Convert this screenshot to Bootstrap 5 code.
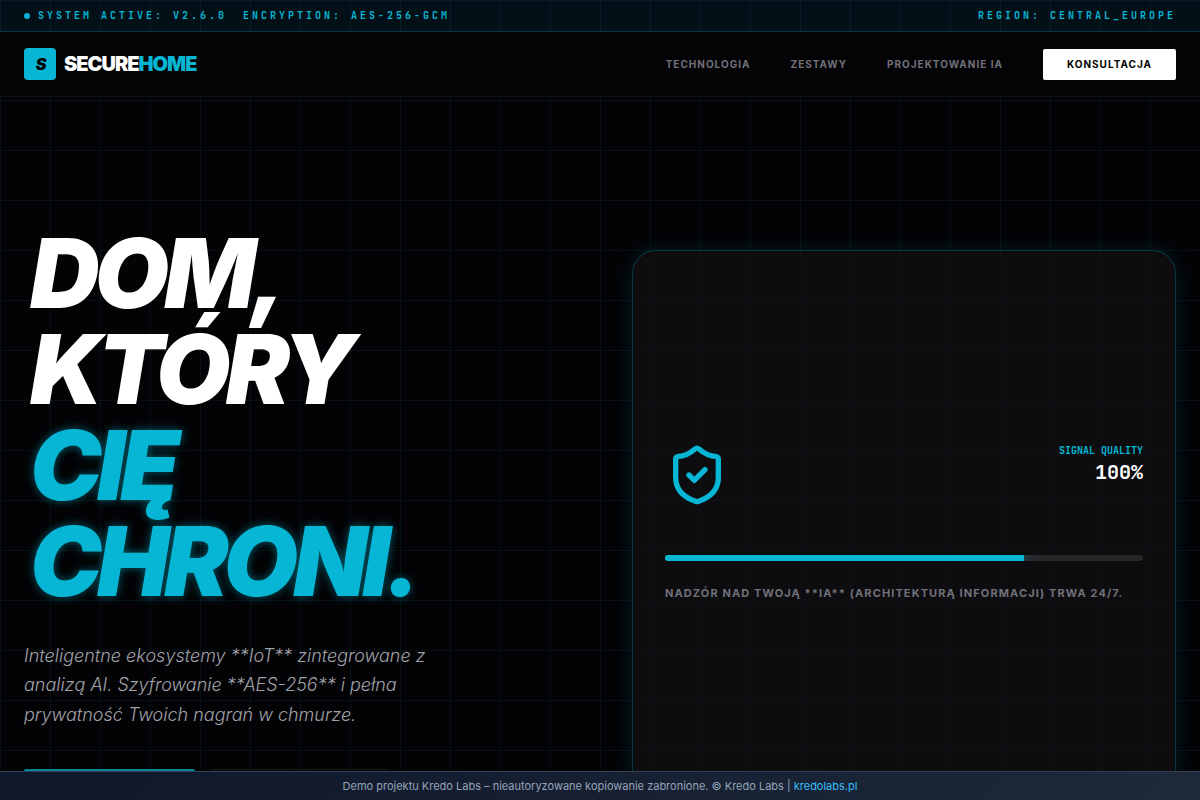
<!DOCTYPE html>
<html lang="pl">
<head>
<meta charset="utf-8">
<meta name="viewport" content="width=device-width, initial-scale=1">
<title>SecureHome</title>
<link href="https://cdn.jsdelivr.net/npm/bootstrap@5.3.0/dist/css/bootstrap.min.css" rel="stylesheet">
<style>
:root { --cyan: #06b6d4; --muted: #71717a; }
body { background: #030305; color: #fff; font-family: Inter, "Liberation Sans", sans-serif; overflow-x: hidden; }
.grid-bg { background-image: linear-gradient(rgba(6,182,212,.08) 1px, transparent 1px), linear-gradient(90deg, rgba(6,182,212,.08) 1px, transparent 1px); background-size: 50px 50px; }
.mono { font-family: "JetBrains Mono", "Liberation Mono", monospace; font-weight: 700; }
.text-cyan { color: var(--cyan); }
.status-bar { background: rgba(6,150,212,.09); border-bottom: 1px solid rgba(6,182,212,.25); font-size: 10px; line-height: 15px; letter-spacing: 3px; padding: 8px 24px; }
.status-dot { width: 6px; height: 6px; background: var(--cyan); }
.site-nav { background: #040406; border-bottom: 1px solid rgba(255,255,255,.06); padding: 16px 24px; }
.logo-mark { width: 32px; height: 32px; border-radius: 4px; background: var(--cyan); color: #000; font-size: 16px; font-weight: 900; font-style: italic; padding-left: 2px; }
.logo-name { font-size: 20px; line-height: 32px; font-weight: 900; letter-spacing: -.05em; color: #fff; }
.menu { gap: 40px; font-size: 10px; line-height: 15px; font-weight: 700; letter-spacing: 1px; }
.menu a { color: var(--muted); text-decoration: none; }
.cta { background: #fff; color: #000; border: 0; border-radius: 2px; padding: 8px 24px; font-size: 10px; line-height: 15px; font-weight: 700; letter-spacing: 1px; }
.hero { padding: 128px 24px; }
.hero .row { --bs-gutter-x: 64px; }
.hero h1 { font-size: 96px; line-height: 96px; font-weight: 900; font-style: italic; letter-spacing: -.05em; padding-left: 6px; margin-bottom: 32px; }
.glow { color: var(--cyan); text-shadow: 0 0 10px rgba(6,182,212,.5); }
.intro { max-width: 448px; font-size: 18px; line-height: 1.625; font-weight: 300; font-style: italic; color: #a1a1aa; margin-bottom: 40px; }
.act { border-radius: 2px; padding: 17px 24px; font-size: 11px; line-height: 17px; font-weight: 700; letter-spacing: 1px; border: 0; color: #fff; }
.act-main { background: #0a859d; min-width: 171px; }
.act-ghost { background: transparent; border: 1px solid #1c1c1f; padding-block: 16px; min-width: 178px; }
.signal { background: rgba(19,18,20,.7); border: 1px solid rgba(6,182,212,.25); border-radius: 24px; box-shadow: 0 0 20px rgba(6,182,212,.15); padding: 32px; aspect-ratio: 1; }
.tiny { font-size: 10px; line-height: 15px; }
.value { font-size: 20px; line-height: 28px; }
.meter { height: 6px; border-radius: 4px; background: #27272a; margin: 48px 0 24px; }
.meter-fill { background: var(--cyan); box-shadow: 0 0 15px rgba(6,182,212,.7); }
.caption-line { font-size: 11px; line-height: 17px; font-weight: 700; letter-spacing: .1em; color: var(--muted); }
.demo-bar { background: linear-gradient(135deg, #0f172a, #1e293b); border-top: 1px solid #334155; color: #94a3b8; font-size: 11px; line-height: 16px; padding: 6px 12px; }
.demo-bar a { color: #38bdf8; text-decoration: none; }
</style>
</head>
<body class="grid-bg">
<div class="status-bar mono text-cyan d-flex justify-content-between">
  <div class="d-flex gap-3">
    <span class="d-flex align-items-center gap-2"><span class="status-dot rounded-circle"></span>SYSTEM ACTIVE: V2.6.0</span>
    <span>ENCRYPTION: AES-256-GCM</span>
  </div>
  <span>REGION: CENTRAL_EUROPE</span>
</div>
<header class="site-nav d-flex justify-content-between align-items-center">
  <a href="#" class="d-flex align-items-center gap-2 text-decoration-none">
    <span class="logo-mark d-flex align-items-center justify-content-center">S</span>
    <span class="logo-name">SECURE<span class="text-cyan">HOME</span></span>
  </a>
  <nav class="menu d-flex align-items-center">
    <a href="#">TECHNOLOGIA</a>
    <a href="#">ZESTAWY</a>
    <a href="#">PROJEKTOWANIE IA</a>
    <button type="button" class="cta">KONSULTACJA</button>
  </nav>
</header>
<main class="hero">
  <div class="row align-items-center">
    <div class="col-6">
      <h1>DOM,<br>KTÓRY<br><span class="glow">CIĘ<br>CHRONI.</span></h1>
      <p class="intro">Inteligentne ekosystemy **IoT** zintegrowane z analizą AI. Szyfrowanie **AES-256** i pełna prywatność Twoich nagrań w chmurze.</p>
      <div class="d-flex gap-3">
        <button type="button" class="act act-main">KONFIGURUJ</button>
        <button type="button" class="act act-ghost">SPECYFIKACJA</button>
      </div>
    </div>
    <div class="col-6">
      <section class="signal d-flex flex-column justify-content-center">
        <div class="d-flex justify-content-between align-items-start">
          <svg class="text-cyan" width="64" height="64" viewBox="0 0 24 24" fill="none" stroke="currentColor" stroke-width="2" stroke-linecap="round" stroke-linejoin="round" aria-hidden="true"><path d="M20 13c0 5-3.5 7.5-7.66 8.95a1 1 0 0 1-.67-.01C7.5 20.5 4 18 4 13V6a1 1 0 0 1 1-1c2 0 4.5-1.2 6.24-2.72a1.17 1.17 0 0 1 1.52 0C14.51 3.81 17 5 19 5a1 1 0 0 1 1 1z"/><path d="m9 12 2 2 4-4"/></svg>
          <div class="mono text-end">
            <div class="tiny text-cyan">SIGNAL QUALITY</div>
            <div class="value">100%</div>
          </div>
        </div>
        <div class="meter overflow-hidden"><div class="meter-fill w-75 h-100"></div></div>
        <div class="caption-line">NADZÓR NAD TWOJĄ **IA** (ARCHITEKTURĄ INFORMACJI) TRWA 24/7.</div>
      </section>
    </div>
  </div>
</main>
<footer class="demo-bar fixed-bottom text-center">Demo projektu Kredo Labs – nieautoryzowane kopiowanie zabronione. © Kredo Labs | <a href="#">kredolabs.pl</a></footer>
<script src="https://cdn.jsdelivr.net/npm/bootstrap@5.3.0/dist/js/bootstrap.bundle.min.js"></script>
</body>
</html>
